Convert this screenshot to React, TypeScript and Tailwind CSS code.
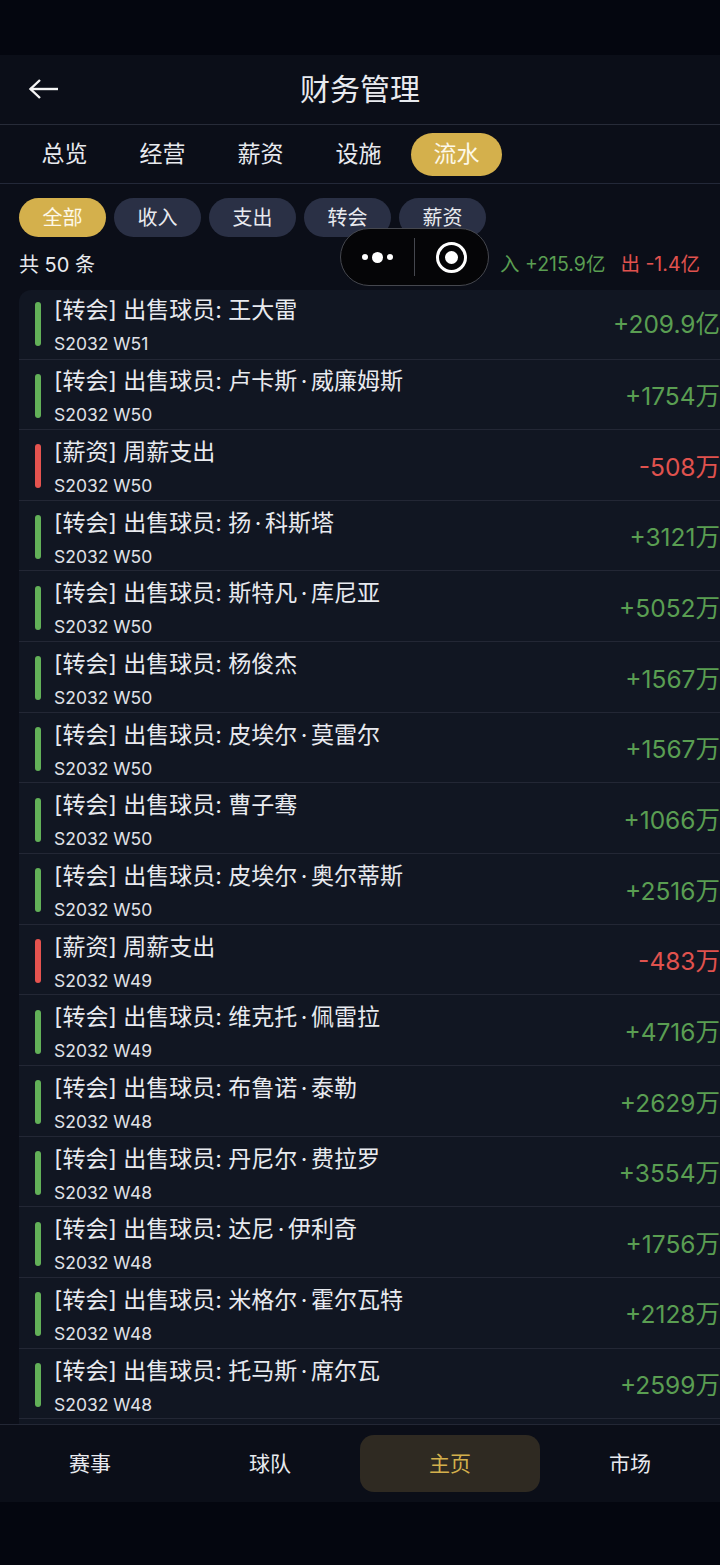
const tabs = ["总览", "经营", "薪资", "设施", "流水"];
const filters = ["全部", "收入", "支出", "转会", "薪资"];
const nav = ["赛事", "球队", "主页", "市场"];

const rows = [
  { title: "[转会] 出售球员: 王大雷", week: "S2032 W51", amount: "+209.9亿" },
  { title: "[转会] 出售球员: 卢卡斯·威廉姆斯", week: "S2032 W50", amount: "+1754万" },
  { title: "[薪资] 周薪支出", week: "S2032 W50", amount: "-508万" },
  { title: "[转会] 出售球员: 扬·科斯塔", week: "S2032 W50", amount: "+3121万" },
  { title: "[转会] 出售球员: 斯特凡·库尼亚", week: "S2032 W50", amount: "+5052万" },
  { title: "[转会] 出售球员: 杨俊杰", week: "S2032 W50", amount: "+1567万" },
  { title: "[转会] 出售球员: 皮埃尔·莫雷尔", week: "S2032 W50", amount: "+1567万" },
  { title: "[转会] 出售球员: 曹子骞", week: "S2032 W50", amount: "+1066万" },
  { title: "[转会] 出售球员: 皮埃尔·奥尔蒂斯", week: "S2032 W50", amount: "+2516万" },
  { title: "[薪资] 周薪支出", week: "S2032 W49", amount: "-483万" },
  { title: "[转会] 出售球员: 维克托·佩雷拉", week: "S2032 W49", amount: "+4716万" },
  { title: "[转会] 出售球员: 布鲁诺·泰勒", week: "S2032 W48", amount: "+2629万" },
  { title: "[转会] 出售球员: 丹尼尔·费拉罗", week: "S2032 W48", amount: "+3554万" },
  { title: "[转会] 出售球员: 达尼·伊利奇", week: "S2032 W48", amount: "+1756万" },
  { title: "[转会] 出售球员: 米格尔·霍尔瓦特", week: "S2032 W48", amount: "+2128万" },
  { title: "[转会] 出售球员: 托马斯·席尔瓦", week: "S2032 W48", amount: "+2599万" },
];

export default function App() {
  return (
    <div className="relative flex h-[1565px] w-[720px] flex-col overflow-hidden bg-[#04060f] font-['Inter','Noto_Sans_CJK_SC',sans-serif] text-[#e8eaef]">
      <div className="h-[55px] shrink-0" />

      <div className="flex min-h-0 flex-1 flex-col bg-[#0b0e18]">
        <header className="relative flex h-[70px] shrink-0 items-center justify-center border-b border-[#272b38]">
          <button className="absolute left-[28px] top-[22px]">
            <svg width="32" height="24" viewBox="0 0 32 24" fill="none" stroke="#f5f5f5" strokeWidth="2.4">
              <path d="M2 12H30" />
              <path d="M12 3L2.5 12L12 21" />
            </svg>
          </button>
          <h1 className="-mt-[2px] text-[30px] font-normal leading-none">财务管理</h1>
        </header>

        <div className="flex h-[59px] shrink-0 items-center gap-[7px] border-b border-[#232838] pl-[19px]">
          {tabs.map((t) => (
            <div
              key={t}
              className={
                t === "流水"
                  ? "flex h-[43px] w-[91px] items-center justify-center rounded-full bg-[#d4b04c] text-[23px] text-[#fdf8e8]"
                  : "flex h-[43px] w-[91px] items-center justify-center text-[23px]"
              }
            >
              {t}
            </div>
          ))}
        </div>

        <div className="mt-[14px] flex shrink-0 gap-[8px] pl-[19px]">
          {filters.map((f) => (
            <div
              key={f}
              className={
                f === "全部"
                  ? "flex h-[39px] w-[87px] items-center justify-center rounded-full bg-[#d4b04c] text-[20px] text-[#fdf8e8]"
                  : "flex h-[39px] w-[87px] items-center justify-center rounded-full bg-[#2a3045] text-[20px]"
              }
            >
              {f}
            </div>
          ))}
        </div>

        <div className="flex h-[53px] shrink-0 items-center justify-between pl-[19px] pr-[20px] pt-[2px] text-[20px]">
          <span>共 50 条</span>
          <span className="flex gap-[15px] text-[19.5px]">
            <span className="text-[#5a9e52]">入 +215.9亿</span>
            <span className="text-[#e0524e]">出 -1.4亿</span>
          </span>
        </div>

        <div className="ml-[19px] min-h-0 flex-1 overflow-hidden rounded-tl-[12px] bg-[#111622]">
          {rows.map((r, i) => {
            const out = r.amount.startsWith("-");
            const [head, ...rest] = r.title.split("·");
            return (
              <div
                key={i}
                className={
                  i === 0
                    ? "flex h-[69.5px] items-center border-b border-[#232735] pl-[16px]"
                    : "flex h-[70.67px] items-center border-b border-[#232735] pl-[16px] pt-[3px]"
                }
              >
                <div className={out ? "h-[44px] w-[6px] shrink-0 rounded-full bg-[#e5534f]" : "h-[44px] w-[6px] shrink-0 rounded-full bg-[#62b058]"} />
                <div className="ml-[13px] min-w-0 flex-1 pt-[4px]">
                  <div className="text-[23px] leading-[33px]">
                    {head}
                    {rest.map((part) => (
                      <span key={part}>
                        <span className="px-[3.5px]">·</span>
                        {part}
                      </span>
                    ))}
                  </div>
                  <div className="mt-[2px] text-[17.5px] leading-[30px] text-[#e0e2e8]">{r.week}</div>
                </div>
                <div className={out ? "pt-[1px] text-[24.5px] text-[#e0524e]" : "pt-[1px] text-[24.5px] text-[#5a9e52]"}>{r.amount}</div>
              </div>
            );
          })}
        </div>

        <nav className="grid h-[78px] shrink-0 grid-cols-4 items-center border-t border-[#232735] bg-[#0b0e18] text-[21px]">
          {nav.map((n) => (
            <div
              key={n}
              className={
                n === "主页"
                  ? "flex h-[57px] items-center justify-center rounded-[14px] bg-[#2f2a22] text-[#d4b04c]"
                  : "flex h-[57px] items-center justify-center"
              }
            >
              {n}
            </div>
          ))}
        </nav>
      </div>

      <div className="h-[63px] shrink-0" />

      {/* floating mini program capsule */}
      <div className="absolute left-[340px] top-[228px] flex h-[58px] w-[149px] items-center rounded-full border border-[#45474e] bg-[#050507]">
        <div className="flex w-[73px] items-center justify-center gap-[4px]">
          <span className="h-[6px] w-[6px] rounded-full bg-white" />
          <span className="h-[11px] w-[11px] rounded-full bg-white" />
          <span className="h-[6px] w-[6px] rounded-full bg-white" />
        </div>
        <div className="h-[38px] w-px bg-[#45474e]" />
        <div className="flex flex-1 items-center justify-center">
          <div className="flex h-[31px] w-[31px] items-center justify-center rounded-full border-[3px] border-white">
            <span className="h-[13px] w-[13px] rounded-full bg-white" />
          </div>
        </div>
      </div>
    </div>
  );
}
